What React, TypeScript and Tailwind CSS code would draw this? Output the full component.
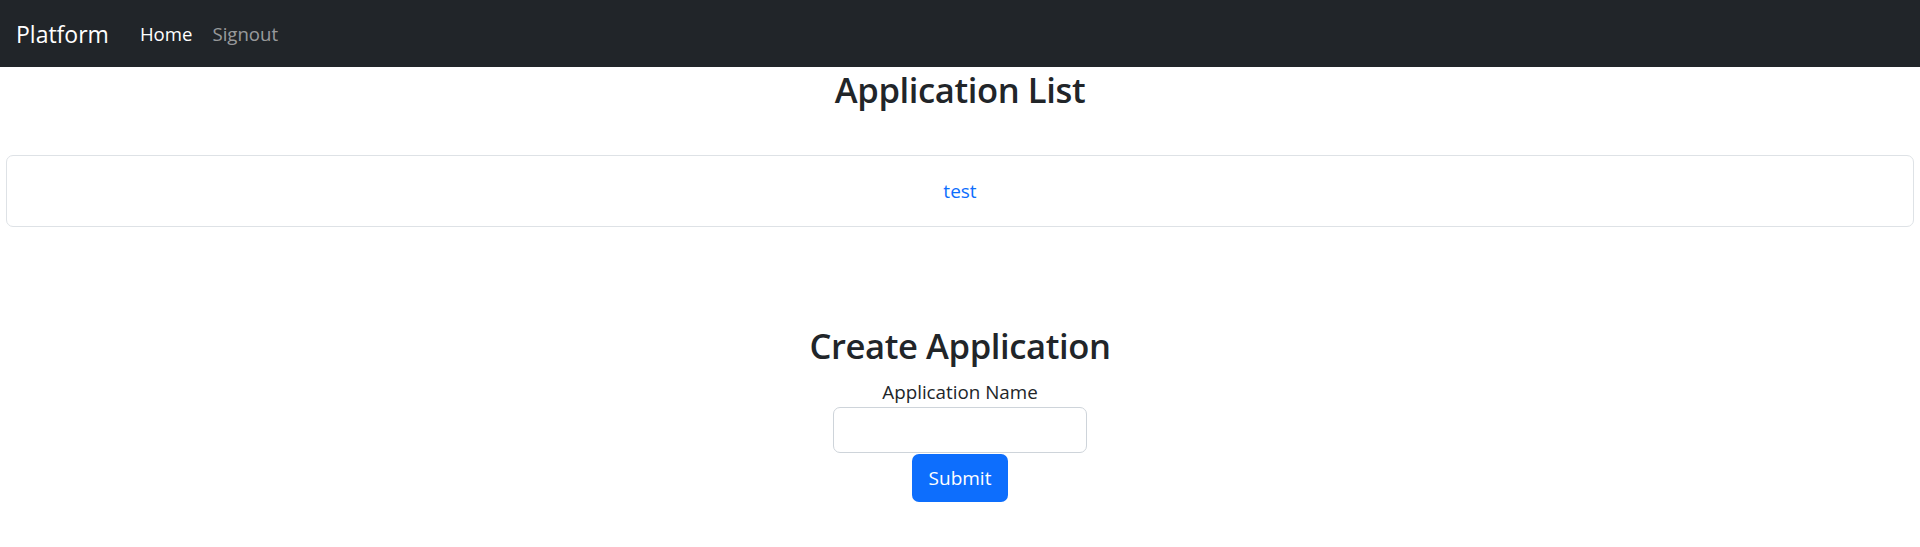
import React from "react";

export default function App() {
  const font = { fontFamily: '"Open Sans", "Noto Sans", sans-serif' };
  return (
    <div className="min-h-[547px] bg-white text-[#212529]" style={font}>
      <nav className="flex h-[67px] items-center bg-[#212529] pl-[16px]">
        <span className="mr-[21px] text-[23px] leading-[36px] text-white">Platform</span>
        <a className="px-[10px] text-[18.6px] leading-[29px] text-white">Home</a>
        <a className="px-[10px] text-[18.6px] leading-[29px] text-[rgba(255,255,255,0.55)]">Signout</a>
      </nav>
      <h2 className="text-center text-[34.6px] font-semibold leading-[46px] tracking-[-0.4px]">Application List</h2>
      <div className="mx-[6px] mt-[42px] flex h-[72px] items-center justify-center rounded-[7px] border border-[#dee2e6]">
        <a className="text-[19px] leading-[29px] text-[#0d6efd]">test</a>
      </div>
      <div className="mt-[96px] flex flex-col items-center">
        <h2 className="text-center text-[34.6px] font-semibold leading-[46px] tracking-[-0.4px]">Create Application</h2>
        <label className="mt-[9px] text-[18.8px] leading-[29px]">Application Name</label>
        <input className="h-[46px] w-[254px] rounded-[7px] border border-[#ced4da] bg-white px-[14px] text-[19.2px] outline-none" />
        <button className="mt-[1px] h-[48px] w-[96px] rounded-[7px] bg-[#0d6efd] text-[19px] text-white">Submit</button>
      </div>
    </div>
  );
}
